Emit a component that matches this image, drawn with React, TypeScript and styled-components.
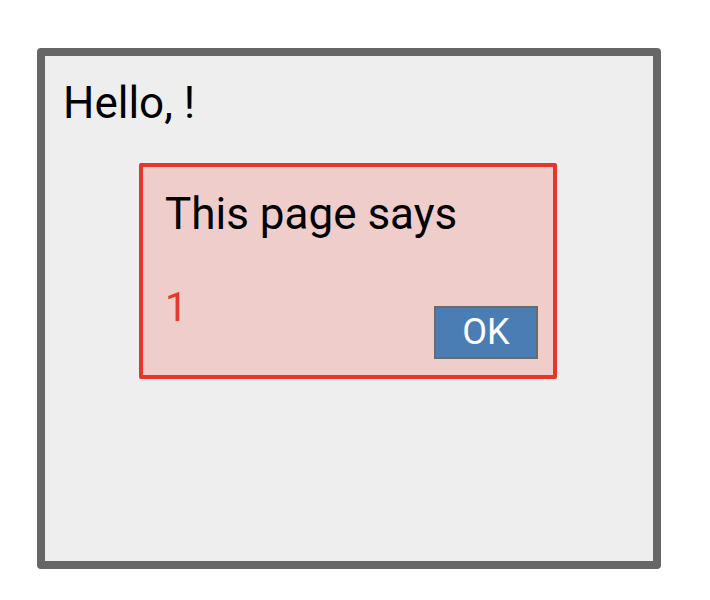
import React from "react";
import styled, { createGlobalStyle } from "styled-components";

const Global = createGlobalStyle`
  html, body { margin: 0; padding: 0; background: #ffffff; }
  body { font-family: Roboto, "Liberation Sans", sans-serif; }
`;

const Page = styled.div`
  padding: 48px 0 0 37px;
`;

const Frame = styled.div`
  box-sizing: border-box;
  width: 624px;
  height: 521px;
  border: 8px solid #666666;
  border-radius: 4px;
  background: #eeeeee;
  padding: 21px 0 0 18px;
`;

const Greeting = styled.div`
  font-size: 44px;
  line-height: 1.2;
  color: #000;
`;

const Dialog = styled.div`
  box-sizing: border-box;
  width: 418px;
  margin: 33px 0 0 76px;
  border: 4px solid #e8352a;
  border-radius: 2px;
  background: #eecdcb;
  padding: 21px 15px 16px 22px;
  display: flex;
  flex-direction: column;
`;

const Title = styled.div`
  font-size: 44px;
  line-height: 1.2;
  color: #000;
`;

const Body = styled.div`
  margin-top: 43px;
  display: flex;
  justify-content: space-between;
  align-items: flex-start;
`;

const Message = styled.div`
  font-size: 40px;
  line-height: 1.2;
  color: #e5392e;
`;

const OkButton = styled.button`
  box-sizing: border-box;
  margin-top: 22px;
  width: 104px;
  height: 53px;
  border: 2px solid #6a6a6a;
  border-radius: 0;
  background: #4a7db4;
  color: #ffffff;
  font-family: Roboto, "Liberation Sans", sans-serif;
  font-size: 36px;
  line-height: 1;
  padding: 0;
  display: flex;
  align-items: center;
  justify-content: center;
`;

export default function App() {
  return (
    <>
      <Global />
      <Page>
        <Frame>
          <Greeting>Hello, !</Greeting>
          <Dialog>
            <Title>This page says</Title>
            <Body>
              <Message>1</Message>
              <OkButton>OK</OkButton>
            </Body>
          </Dialog>
        </Frame>
      </Page>
    </>
  );
}
